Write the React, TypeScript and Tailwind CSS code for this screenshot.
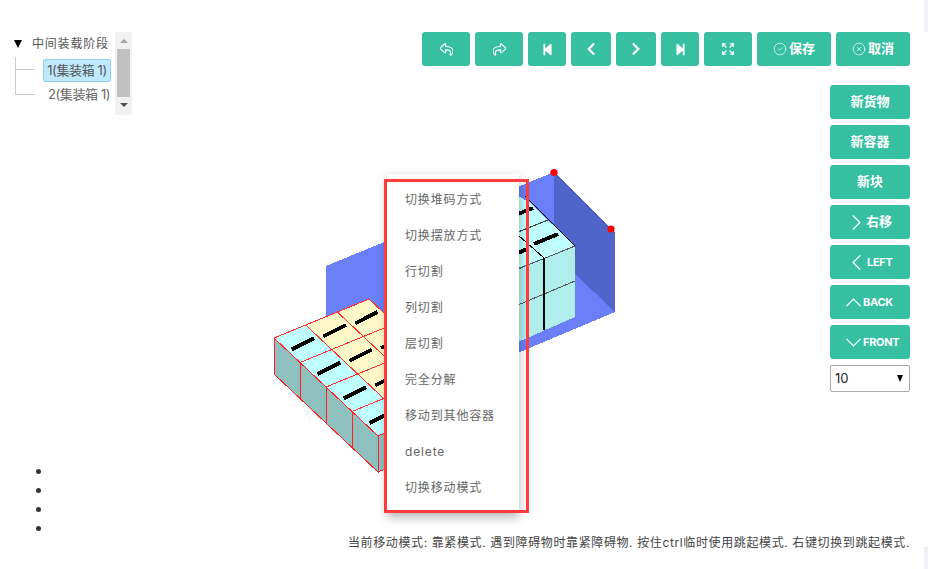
import React from "react";
import { Expand, CircleCheck, CircleX, ChevronRight, ChevronLeft, ChevronUp, ChevronDown } from "lucide-react";
import { FaStepBackward, FaStepForward, FaChevronLeft, FaChevronRight, FaReply, FaShare } from "react-icons/fa";

const P = (i: number, j: number): [number, number] => [274 + 26 * i + 31.7 * j, 338 + 24.5 * i - 13 * j];
const pts = (a: [number, number][]) => a.map((p) => p.join(",")).join(" ");

function Scene() {
  const cells: React.ReactNode[] = [];
  for (let i = 0; i < 4; i++) {
    for (let j = 0; j < 3; j++) {
      const cream = j > 0 && i < 3;
      const a = P(i + 0.5 + 0.03, j + 0.12);
      const b = P(i + 0.5 - 0.03, j + 0.88);
      cells.push(
        <g key={`${i}-${j}`}>
          <polygon points={pts([P(i, j), P(i, j + 1), P(i + 1, j + 1), P(i + 1, j)])} fill={cream ? "#fff8c8" : "#c0ffff"} stroke="#ff3030" strokeWidth="1" />
          <line x1={a[0]} y1={a[1]} x2={b[0]} y2={b[1]} stroke="#000" strokeWidth="3.8" />
        </g>
      );
    }
  }
  const side: React.ReactNode[] = [];
  for (let i = 0; i < 4; i++) {
    const a = P(i, 0);
    const b = P(i + 1, 0);
    side.push(
      <polygon key={i} points={pts([a, b, [b[0], b[1] + 36], [a[0], a[1] + 36]])} fill="#8fc0c0" stroke="#ff2020" strokeWidth="1" />
    );
  }
  const e = P(4, 0);
  return (
    <svg className="absolute inset-0" width="928" height="569" viewBox="0 0 928 569" shapeRendering="crispEdges">
      <polygon points="326,266 554,172 575,274 615,312 520,352 400,400 326,340" fill="#6a7ff8" />
      <polygon points="554,172 615,232 615,312 554,254" fill="#5164c9" />
      <polygon points="575,274 615,312 520,352 500,300" fill="#6a7ff8" />
      <polygon points="518,196 529,202 575,246 544,258 518,268" fill="#c0ffff" />
      <polygon points="518,269 575,246 575,317 518,342" fill="#b0eeee" />
      <g stroke="#000" fill="none" strokeWidth="1">
        <line x1="525" y1="196" x2="575" y2="246" />
        <line x1="518" y1="232" x2="548" y2="220" stroke="#444" />
        <line x1="518" y1="235" x2="544" y2="258" />
      </g>
      <g stroke="#555" strokeWidth="1">
        <line x1="518" y1="269" x2="575" y2="246" />
        <line x1="518" y1="305" x2="575" y2="281" />
      </g>
      <line x1="543.5" y1="258" x2="543.5" y2="330" stroke="#000" strokeWidth="2" />
      <line x1="534" y1="244" x2="558" y2="234" stroke="#000" strokeWidth="3.8" />
      <line x1="518" y1="214" x2="533" y2="208" stroke="#000" strokeWidth="3.8" />
      <line x1="518" y1="253" x2="527" y2="249" stroke="#000" strokeWidth="3.8" />
      {cells}
      {side}
      <polygon points={pts([e, [e[0] + 12, e[1] - 5], [e[0] + 12, e[1] + 31], [e[0], e[1] + 36]])} fill="#8fc0c0" stroke="#ff2020" strokeWidth="1" />
      <circle cx="554" cy="172.5" r="3.6" fill="#ff0000" shapeRendering="auto" />
      <circle cx="611" cy="229" r="3.6" fill="#ff0000" shapeRendering="auto" />
    </svg>
  );
}

const btn = "flex items-center justify-center h-[34px] rounded-[3px] bg-[#36bfa1] text-white font-bold text-[13px]";
const left = "flex items-center justify-start h-[34px] rounded-[3px] bg-[#36bfa1] text-white font-bold";

function Tree() {
  return (
    <div className="relative flex h-[83px] w-[132px] text-[#555] text-[13px]">
      <div className="relative w-[115px] flex-none">
        <div className="flex h-[24px] items-center">
          <span className="ml-[14px] h-0 w-0 border-x-[4.5px] border-t-[8px] border-x-transparent border-t-black" />
          <span className="ml-[10px] text-[12px] tracking-[0.8px]">中间装载阶段</span>
        </div>
        <div className="absolute left-[15px] top-[25px] h-[37px] w-0 border-l border-[#ccc]" />
        <div className="absolute left-[15px] top-[37px] h-0 w-[20px] border-t border-[#ccc]" />
        <div className="absolute left-[15px] top-[62px] h-0 w-[20px] border-t border-[#ccc]" />
        <div className="ml-[43px] mt-[3px] flex h-[23px] w-[68px] items-center justify-center whitespace-nowrap rounded-[2px] border border-[#8fd0f0] bg-[#bfe9ff] tracking-[-0.4px]">1(集装箱 1)</div>
        <div className="ml-[48px] mt-[1px] flex h-[24px] items-center whitespace-nowrap tracking-[-0.4px] text-[#666]">2(集装箱 1)</div>
      </div>
      <div className="flex w-[17px] flex-none flex-col items-center bg-[#f1f1f1]">
        <div className="mt-[7px] h-0 w-0 border-x-[4px] border-b-[4px] border-x-transparent border-b-[#a3a3a3]" />
        <div className="mt-[6px] h-[48px] w-[13px] bg-[#c1c1c1]" />
        <div className="mt-[6px] h-0 w-0 border-x-[4px] border-t-[4px] border-x-transparent border-t-[#505050]" />
      </div>
    </div>
  );
}

function Toolbar() {
  return (
    <div className="flex gap-[5px]">
      <div className={`${btn} w-[48px]`}><FaReply size={13} fill="none" stroke="currentColor" strokeWidth={45} /></div>
      <div className={`${btn} w-[48px]`}><FaShare size={13} fill="none" stroke="currentColor" strokeWidth={45} /></div>
      <div className={`${btn} w-[38px]`}><FaStepBackward size={13} /></div>
      <div className={`${btn} w-[40px]`}><FaChevronLeft size={14} /></div>
      <div className={`${btn} w-[40px]`}><FaChevronRight size={14} /></div>
      <div className={`${btn} w-[38px]`}><FaStepForward size={13} /></div>
      <div className={`${btn} w-[48px]`}><Expand size={14} strokeWidth={2} /></div>
      <div className={`${btn} w-[74px] gap-[2px]`}><CircleCheck size={14} strokeWidth={1.2} />保存</div>
      <div className={`${btn} w-[74px] gap-[2px]`}><CircleX size={14} strokeWidth={1.2} />取消</div>
    </div>
  );
}

function SideButtons() {
  return (
    <div className="mt-[19px] flex w-[80px] flex-col gap-[6px]">
      <div className={btn}>新货物</div>
      <div className={btn}>新容器</div>
      <div className={btn}>新块</div>
      <div className={`${left} pl-[13px] text-[13px]`}><ChevronRight size={27} strokeWidth={1.1} className="-mr-[4px]" />右移</div>
      <div className={`${left} pl-[13px] text-[11px] tracking-[-0.3px]`}><ChevronLeft size={27} strokeWidth={1.1} className="-mr-[3px]" />LEFT</div>
      <div className={`${left} pl-[10px] text-[11px] tracking-[-0.3px]`}><ChevronUp size={27} strokeWidth={1.1} className="-mr-[4px]" />BACK</div>
      <div className={`${left} pl-[10px] text-[11px] tracking-[-0.3px]`}><ChevronDown size={27} strokeWidth={1.1} className="-mr-[4px]" />FRONT</div>
      <div className="flex h-[27px] items-center justify-between rounded-[2px] border border-[#aaa] bg-white pl-[4px] pr-[6px] text-[13px] text-[#222]">
        <span>10</span>
        <span className="h-0 w-0 border-x-[3.5px] border-t-[7px] border-x-transparent border-t-black" />
      </div>
    </div>
  );
}

const items = ["切换堆码方式", "切换摆放方式", "行切割", "列切割", "层切割", "完全分解", "移动到其他容器", "delete", "切换移动模式"];

function Menu() {
  return (
    <div className="absolute left-[387px] top-[174px] w-[132px] bg-white pb-[7px] pt-[8px] pl-[18px] shadow-[0_4px_10px_rgba(0,0,0,0.3)]">
      {items.map((t) => (
        <div key={t} className="flex h-[36px] items-center text-[12px] tracking-[0.85px] text-[#666]">{t}</div>
      ))}
    </div>
  );
}

export default function App() {
  return (
    <div
      className="relative flex h-[569px] w-[928px] flex-col overflow-hidden bg-white pt-[32px]"
      style={{ fontFamily: '"Inter", "Noto Sans CJK SC", sans-serif' }}
    >
      <Scene />
      <div className="absolute right-0 top-0 h-[32px] w-[4px] bg-[#eef0f6]" />
      <div className="absolute bottom-0 right-0 h-[22px] w-[4px] bg-[#eef0f6]" />
      <div className="relative flex justify-between pr-[18px]">
        <Tree />
        <div className="flex flex-col items-end">
          <Toolbar />
          <SideButtons />
        </div>
      </div>
      <div className="relative mt-auto">
        <ul className="-mb-[2px] ml-[53px] list-disc text-[16px] leading-[19px] text-[#333]">
          <li>&nbsp;</li>
          <li>&nbsp;</li>
          <li>&nbsp;</li>
          <li>&nbsp;</li>
        </ul>
        <div className="mb-[18px] pr-[18px] text-right text-[12px] leading-[16px] tracking-[0.62px] text-[#444]">
          当前移动模式: 靠紧模式. 遇到障碍物时靠紧障碍物. 按住ctrl临时使用跳起模式. 右键切换到跳起模式.
        </div>
      </div>
      <Menu />
      <div className="absolute left-[384px] top-[179px] h-[334px] w-[145px] border-[3px] border-[#ff3b3b]" />
    </div>
  );
}
